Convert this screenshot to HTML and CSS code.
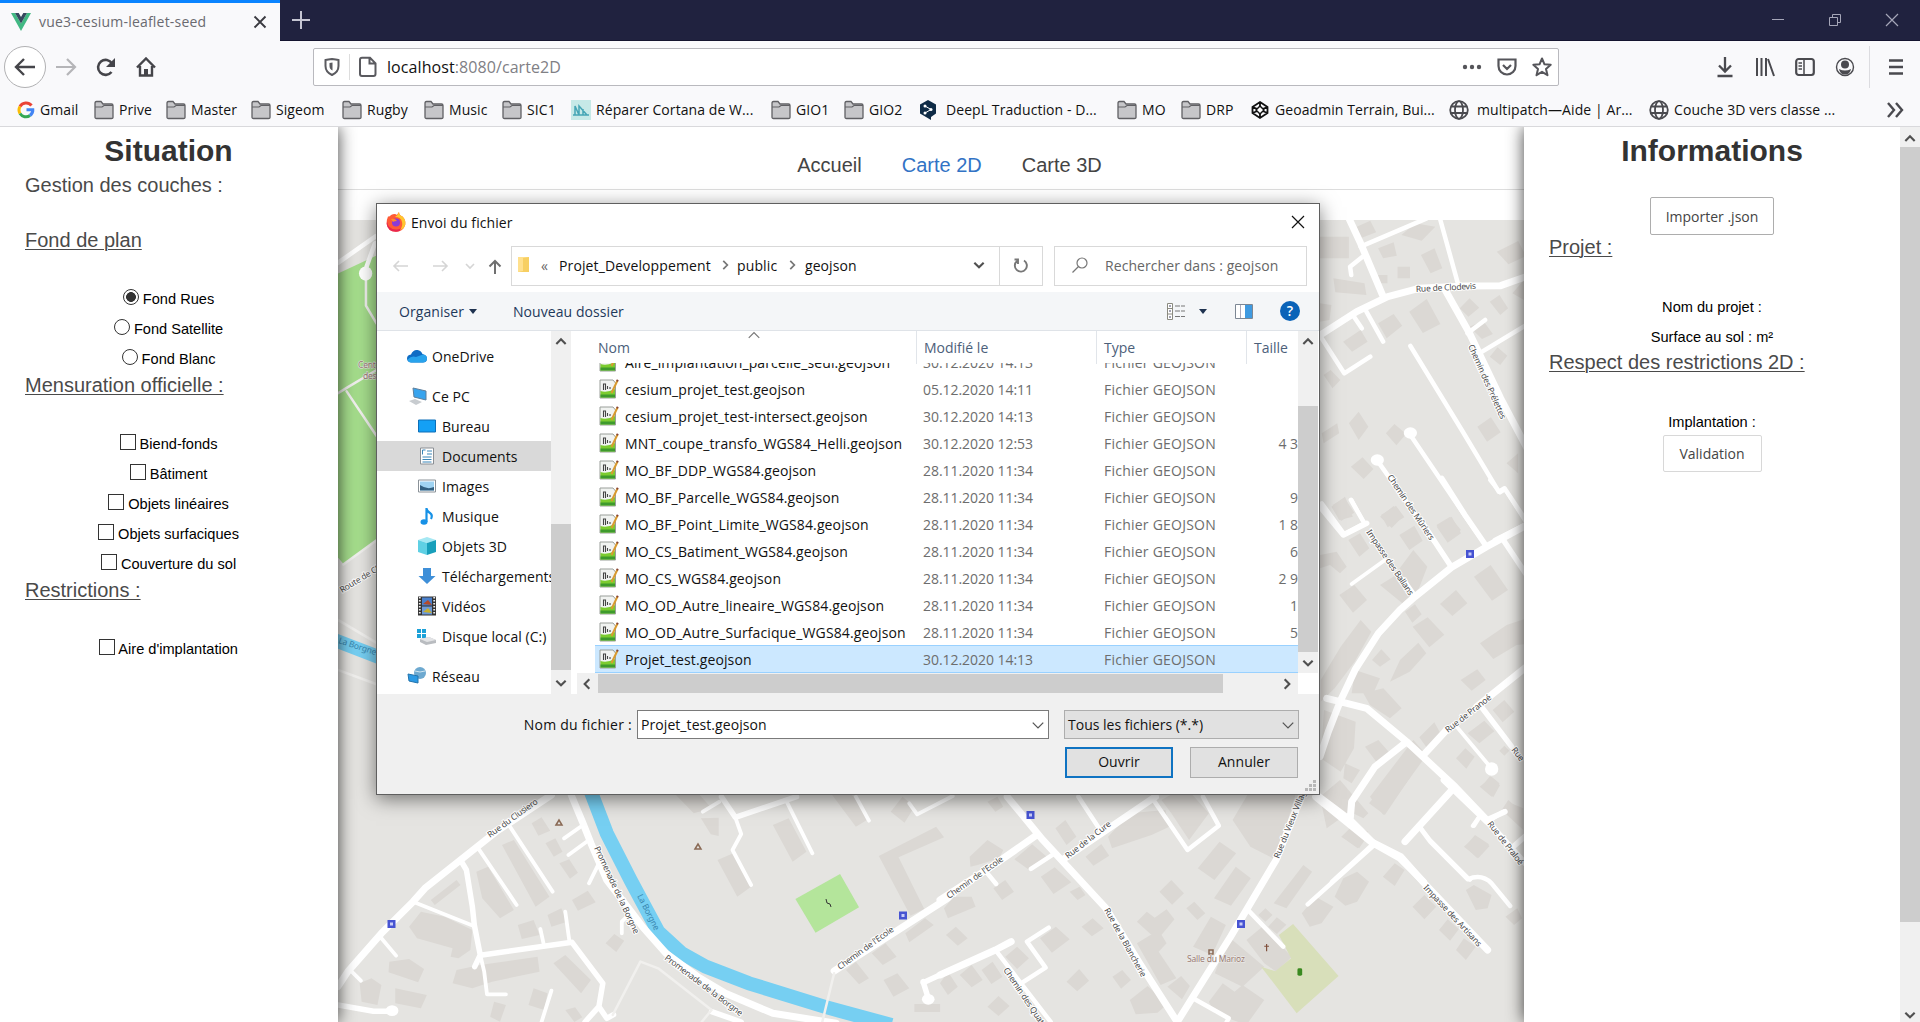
FILE: index.html
```html
<!DOCTYPE html>
<html lang="fr">
<head>
<meta charset="utf-8">
<title>vue3-cesium-leaflet-seed</title>
<link rel="stylesheet" href="styles.css">
</head>
<body>
<svg class="defs" width="0" height="0">
  <symbol id="folder" viewBox="0 0 20 20"><path d="M1 17V3.500Q1 1.500 2.500 1.500H7l2 2.500h8.500Q19 4 19 5.500v12q0 1-1.500 1h-15Q1 18.500 1 17z" fill="#c6c6c9" stroke="#606064" stroke-width="1.300"/><path d="M1 7h7l2-1.500h9" fill="none" stroke="#606064" stroke-width="1.200"/></symbol>
  <symbol id="globe" viewBox="0 0 20 20"><g fill="none" stroke="#4a4a4f" stroke-width="1.800"><circle cx="10" cy="10" r="8.800"/><ellipse cx="10" cy="10" rx="4" ry="8.800"/><path d="M2 6.500h16M1.500 13h17"/></g></symbol>
  <symbol id="geofile" viewBox="0 0 20 20"><path d="M1 1h13l2.500 3v15H1z" fill="#f1f3f1" stroke="#9a9f9a"/><path d="M1.500 12Q8 14 16 10V18.500H1.500z" fill="#7ccc30"/><path d="M1.500 15.500h14.500v3h-14.500z" fill="#3e9a2d"/><path d="M4.500 11V5h2v6M8.500 7v3M11 8v2" stroke="#444" fill="none" stroke-width="1.100"/><path d="M18.500 1.500L12.500 14" stroke="#d99a30" stroke-width="2"/><path d="M18.800 .8l-.8 1.600" stroke="#843" stroke-width="2"/></symbol>
  <symbol id="up" viewBox="0 0 12 12"><path d="M2 8.500L6 4.500l4 4" fill="none" stroke="#505050" stroke-width="1.800"/></symbol>
  <symbol id="down" viewBox="0 0 12 12"><path d="M2 4l4 4 4-4" fill="none" stroke="#505050" stroke-width="1.800"/></symbol>
  <symbol id="thin" viewBox="0 0 12 12"><path d="M1.500 4L6 8.500 10.500 4" fill="none" stroke="#555" stroke-width="1.100"/></symbol>
  <symbol id="crumb" viewBox="0 0 12 12"><path d="M4.500 2.500L8 6 4.500 9.500" fill="none" stroke="#777" stroke-width="1.500"/></symbol>
  <symbol id="right" viewBox="0 0 12 12"><path d="M4 2l4 4-4 4" fill="none" stroke="#505050" stroke-width="1.800"/></symbol>
  <symbol id="left" viewBox="0 0 12 12"><path d="M8 2L4 6l4 4" fill="none" stroke="#505050" stroke-width="1.800"/></symbol>
</svg>

<header class="browser">
  <div class="tabbar">
    <div class="tab">
      <svg width="20" height="18" viewBox="0 0 20 18"><path d="M0 0h4l6 10.500L16 0h4L10 18z" fill="#41b883"/><path d="M4 0h3.700L10 4l2.300-4H16l-6 10.500z" fill="#35495e"/></svg>
      <span class="tab-title">vue3-cesium-leaflet-seed</span>
      <svg class="tab-close" width="14" height="14" viewBox="0 0 14 14"><path d="M1.500 1.500l11 11m0-11l-11 11" stroke="#3a3a40" stroke-width="1.900"/></svg>
    </div>
    <svg class="plus" width="18" height="18" viewBox="0 0 18 18"><path d="M9 0v18M0 9h18" stroke="#c5c5d2" stroke-width="2"/></svg>
    <div class="winctl">
      <svg width="14" height="14" viewBox="0 0 14 14"><path d="M1 6.500h12" stroke="#a5a6b8"/></svg>
      <svg width="14" height="14" viewBox="0 0 14 14"><path d="M1.500 4.500h8v8h-8zM4.500 4.500v-3h8v8h-3" fill="none" stroke="#a5a6b8"/></svg>
      <svg width="14" height="14" viewBox="0 0 14 14"><path d="M1 1l12 12m0-12L1 13" stroke="#a5a6b8" stroke-width="1.200"/></svg>
    </div>
  </div>
  <div class="navbar">
    <div class="back"><svg width="22" height="20" viewBox="0 0 22 20"><path d="M21 10H3M10 2L2 10l8 8" fill="none" stroke="#45454a" stroke-width="2.400"/></svg></div>
    <svg class="fwd" width="22" height="20" viewBox="0 0 22 20"><path d="M1 10h18M12 2l8 8-8 8" fill="none" stroke="#b5b5b8" stroke-width="2.200"/></svg>
    <svg class="reload" width="20" height="20" viewBox="0 0 20 20"><path d="M15.500 15A7.500 7.500 0 1 1 16 6.500" fill="none" stroke="#45454a" stroke-width="2.600"/><path d="M19 1v9h-9z" fill="#45454a"/></svg>
    <svg class="home" width="20" height="20" viewBox="0 0 20 20"><path d="M1 10.500L10 1.500l9 9M4 9v9.500h12V9" fill="none" stroke="#45454a" stroke-width="2.400"/><path d="M8 12h4v6H8z" fill="#45454a"/></svg>
    <div class="urlbar">
      <svg width="18" height="20" viewBox="0 0 18 20"><path d="M9 2Q13 2.500 15.500 3v6q0 6-6.500 9-6.500-3-6.500-9V3Q5 2.500 9 2z" fill="none" stroke="#5a5a5f" stroke-width="2"/><path d="M9.500 5.500v8Q6.500 12 6.500 9V6z" fill="#5a5a5f"/></svg>
      <span class="sep"></span>
      <svg width="20" height="22" viewBox="0 0 20 22"><path d="M4 1.800h8l5.500 5.500V18q0 2-2 2H4q-2 0-2-2V3.800q0-2 2-2zM11.500 2v5.500H17" fill="none" stroke="#5a5a5f" stroke-width="2"/></svg>
      <span class="url"><b>localhost</b>:8080/carte2D</span>
      <span class="urlicons">
        <svg width="20" height="20" viewBox="0 0 20 20"><g fill="#55555a"><circle cx="3" cy="10" r="2.200"/><circle cx="10" cy="10" r="2.200"/><circle cx="17" cy="10" r="2.200"/></g></svg>
        <svg width="20" height="20" viewBox="0 0 20 20"><path d="M1.500 2.500h17V9a8.500 8.500 0 0 1-17 0zM6 8l4 4 4-4" fill="none" stroke="#55555a" stroke-width="2.200"/></svg>
        <svg width="20" height="20" viewBox="0 0 20 20"><path d="M10 1.500l2.500 5.800 6.200.5-4.700 4.100 1.500 6.300L10 14.800l-5.500 3.400L6 11.900 1.300 7.800l6.200-.5z" fill="none" stroke="#55555a" stroke-width="2" stroke-linejoin="round"/></svg>
      </span>
    </div>
    <div class="tools">
      <svg width="20" height="22" viewBox="0 0 20 22"><path d="M10 1v14M4 9.500l6 6 6-6M2.500 20h15" fill="none" stroke="#4a4a4f" stroke-width="2.300"/></svg>
      <svg width="20" height="20" viewBox="0 0 20 20"><path d="M2 1v18M6.500 1v18M11 1v18M13 2l6 17" fill="none" stroke="#4a4a4f" stroke-width="2"/></svg>
      <svg width="20" height="20" viewBox="0 0 20 20"><rect x="1.200" y="2" width="17.600" height="16" rx="2.500" fill="none" stroke="#4a4a4f" stroke-width="2.200"/><path d="M9 2v16M3.500 6H7M3.500 9H7M3.500 12H7" stroke="#4a4a4f" stroke-width="1.500"/></svg>
      <svg width="20" height="20" viewBox="0 0 20 20"><circle cx="10" cy="10" r="8.500" fill="none" stroke="#4a4a4f" stroke-width="1.400"/><circle cx="10" cy="7.500" r="4" fill="#4a4a4f"/><path d="M4 12q6 3 12 0-1 5.500-6 5.500T4 12z" fill="#4a4a4f"/></svg>
      <span class="tsep"></span>
      <svg width="16" height="18" viewBox="0 0 16 18"><path d="M1 2.500h14M1 9h14M1 15.500h14" stroke="#4a4a4f" stroke-width="2.300"/></svg>
    </div>
  </div>
  <nav class="bookmarks">
    <a><svg width="18" height="18" viewBox="0 0 18 18"><g fill="none" stroke-width="3"><path d="M14.500 4.500A7 7 0 0 0 3 5.500" stroke="#ea4335"/><path d="M3 5.500A7 7 0 0 0 3 12.500" stroke="#fbbc05"/><path d="M3 12.500A7 7 0 0 0 13 14.500" stroke="#34a853"/><path d="M13 14.500Q16 12 15.800 8.800H9.500" stroke="#4285f4"/></g></svg>Gmail</a>
    <a><svg class="i20"><use href="#folder"/></svg>Prive</a>
    <a><svg class="i20"><use href="#folder"/></svg>Master</a>
    <a><svg class="i20"><use href="#folder"/></svg>Sigeom</a>
    <a><svg class="i20"><use href="#folder"/></svg>Rugby</a>
    <a><svg class="i20"><use href="#folder"/></svg>Music</a>
    <a><svg class="i20"><use href="#folder"/></svg>SIC1</a>
    <a><svg class="i20" viewBox="0 0 20 20"><path d="M0 0h20v20H0z" fill="#c6e9e7"/><path d="M2 15h16M4 15V6l4 9V6l8 9M12 15V9" fill="none" stroke="#45a5b5" stroke-width="1.500"/></svg>Réparer Cortana de W...</a>
    <a><svg class="i20"><use href="#folder"/></svg>GIO1</a>
    <a><svg class="i20"><use href="#folder"/></svg>GIO2</a>
    <a><svg class="i20 wide" viewBox="0 0 20 20"><path d="M10 0l8 4.500v9L13 17v3l-5-3-6-3.500v-9z" fill="#0f2b46"/><path d="M7 6l6 3.500L7 13" fill="none" stroke="#fff"/><g fill="#fff"><circle cx="7" cy="6" r="1.500"/><circle cx="13" cy="9.500" r="1.500"/><circle cx="7" cy="13" r="1.500"/></g></svg>DeepL Traduction - D...</a>
    <a><svg class="i20"><use href="#folder"/></svg>MO</a>
    <a><svg class="i20"><use href="#folder"/></svg>DRP</a>
    <a><svg class="i20" viewBox="0 0 20 20"><path d="M10 2l7.500 5v6L10 18l-7.500-5V7zM2.500 7l15 6m0-6l-15 6M10 2v4M10 14v4" fill="none" stroke="#111" stroke-width="1.800"/><path d="M10 6l4 4-4 4-4-4z" fill="#fff" stroke="#111" stroke-width="1.500"/></svg>Geoadmin Terrain, Bui...</a>
    <a><svg class="i20 wide"><use href="#globe"/></svg>multipatch—Aide | Ar...</a>
    <a><svg class="i20"><use href="#globe"/></svg>Couche 3D vers classe ...</a>
    <svg class="more" width="17" height="16" viewBox="0 0 17 16"><path d="M1 1l6 7-6 7M9 1l6 7-6 7" fill="none" stroke="#4a4a4f" stroke-width="2.400"/></svg>
  </nav>
</header>

<main class="page">
  <aside class="panel left">
    <h1>Situation</h1>
    <h2 class="plain">Gestion des couches :</h2>
    <h2>Fond de plan</h2>
    <label><input type="radio" name="fond" checked> Fond Rues</label>
    <label><input type="radio" name="fond"> Fond Satellite</label>
    <label><input type="radio" name="fond"> Fond Blanc</label>
    <h2>Mensuration officielle :</h2>
    <label><input type="checkbox"> Biend-fonds</label>
    <label><input type="checkbox"> Bâtiment</label>
    <label><input type="checkbox"> Objets linéaires</label>
    <label><input type="checkbox"> Objets surfaciques</label>
    <label><input type="checkbox"> Couverture du sol</label>
    <h2>Restrictions :</h2>
    <label><input type="checkbox"> Aire d'implantation</label>
  </aside>

  <section class="center">
    <nav class="menu"><a>Accueil</a><a class="on">Carte 2D</a><a>Carte 3D</a></nav>
    <svg class="map" viewBox="338 220 1186 802" preserveAspectRatio="none">
      <!-- west edge: park, stream -->
      <g transform="translate(0 120) scale(.3333 .3571)">
        <path class="park" d="M1014 430L1140 375V1170L1032 1245 1014 1225z"/>
        <path class="rd w5" d="M1014 400L1128 325M1125 345L1100 410"/><path class="rd w3 soft" d="M1098 440V520L1130 570M1014 765L1040 750 1130 700M1040 760L1130 885M1030 1245L1140 1170M1014 1400L1140 1470M1014 1540L1130 1580"/>
        <circle class="dot" cx="1097" cy="430" r="20"/>
        <path class="river" d="M1000 1455L1140 1505"/>
      </g>
      <!-- south-west quarter -->
      <g transform="translate(330 780) scale(.3954 .3333)">
        <path class="bld" d="M435 195l30-15 90 170-35 30zM370 275l30-15 65 130-35 25-45-60zM255 360l65-60 10 15-65 60zM200 440l30-45 60 15 70 40-5 60-30 25-20-5 5-25-90-30zM150 545l50-8 38 30-15 40-75-30zM75 610l30-15 25 20-10 60-40-10zM165 625l80 20-15 40-65-15zM320 570l60-15 145-25 5 45-120 30-50 20-50-15zM565 550l30-25 65 75-25 40zM475 435l40-15 15 45-45 12zM550 405l35-20 15 40-40 15zM612 360l40-28 20 35-45 25zM510 130l25-18 22 40-30 15zM545 190l25-15 18 40-22 15zM580 250l25-12 22 40-20 18zM697 490l22-28 25 20-20 34zM515 625l35 15-8 50-40-15zM415 665l30 10-15 50-25-15zM595 690l25-8 18 30-20 14z"/>
        <path class="bld" d="M875 45h60l30 40-45 15zM938 115l45-2v55l-20-5zM980 240l40-20 45 100-35 30zM1120 135l40-20 45 100-35 30zM1270 45h50l45 70-35 25zM1418 95l30-45 30 30-25 48zM1388 228l145-88 20 32-115 60 65 155-35 20zM1455 460l50-45 22 20-62 52zM1370 520l35-30 28 40-35 25zM1305 570l25-25 33 50-25 18zM1400 600l35-20 30 45-40 25zM1478 672h65v24h-65z"/>
        <path class="park2" d="M1177 357L1290 282 1338 382 1228 458z"/>
        <path class="river" d="M658 30L700 160 760 300 830 455 890 520 950 560 1060 610 1250 680 1420 735"/>
        <path class="rd w8" d="M20 620L45 575 130 460 210 365 240 325 330 240 420 155 560 45M610 45L640 130 660 190 700 300 765 400 790 440 850 520 930 590 1000 640 1120 700 1280 730M1275 573L1575 345"/>
        <path class="rd w6" d="M330 240L345 270 360 380 365 435 380 525 366 560M385 525L612 487 690 610 680 680 645 726M680 680L700 715 717 704M990 50L1025 112 1180 50M1500 605L1513 655M1500 608L1575 567M20 675L110 694H150M965 695L1040 726"/>
        <path class="rd w4" d="M210 365L362 437M375 205L472 375M455 140L563 335M540 490L532 447M605 480L595 395M380 525L390 575 397 643H445M130 475L167 527M55 575L78 602M640 135L592 175M655 180L603 225M680 250L655 310M755 405L738 425V460M560 632L535 726M1025 112L1040 162 1018 210 1065 315M1155 65L1220 220M985 65L943 95M1330 50L1363 122M1465 70L1485 103 1575 48"/>
        <path class="rd w4 soft" d="M715 705L785 545 830 565 965 690 940 726M1275 580L1245 726"/>
        <circle class="dot" cx="157" cy="692" r="16"/><circle class="dot" cx="1513" cy="658" r="16"/>
      </g>
      <!-- north-east quarter -->
      <g transform="translate(1310 120) scale(.3891 .3333)">
        <path class="bld" d="M25 350h75v65H25zM120 320l35-18 15 35-40 18zM235 345l35-35 52 10-35 42zM175 385l40-18 8 40-35 8zM285 405l35-20 20 60-30 15zM480 395l55-32 20 45-45 25zM225 440h32v35h-32zM60 475l80 15 5 35-80-8zM175 465h24v25h-24zM25 550l30 5-5 45-25 5zM85 665l45-35 18 35-40 30zM175 610l40-28 22 35-40 38zM255 575l45-38 35 75-45 27zM385 565l25-30 25 28-28 27zM462 545l25-20 22 40-20 20zM410 620l35-18 25 40-28 15zM462 710l20-28 25 25-18 28zM35 765l18-15 25 30-20 25zM30 940l40-30 5 30-40 30zM100 910l25-35 25 45-25 40zM195 940l22-28 30 30-25 34zM430 920l35-28 25 45-35 28zM105 1040l30-28 28 35-25 30zM505 1030l30-30v60zM55 1160l35-30 20 60-35 10zM180 1190l35-32 25 30-30 36zM325 1215l35-25 28 40-30 30zM520 520l30-40v60z"/>
        <path class="rd w8" d="M100 295L130 370 190 535M20 650L120 575 200 530 280 505 400 498 490 497 555 470M345 505L410 640 490 835 560 990"/>
        <path class="rd w5" d="M130 380L300 295M335 300L380 490M258 678L390 930 485 1115 500 1105 560 1210M258 945L400 1190 445 1265M175 1025L320 1265M30 655L88 760 155 710M145 575L188 665M135 410L103 440 106 465M113 590L133 625M405 640L450 600M435 700L560 612M475 1260L560 1210M30 1150L88 1243 140 1210 105 1140"/>
        <circle class="dot" cx="258" cy="939" r="17"/><circle class="dot" cx="173" cy="1020" r="17"/>
      </g>
      <!-- east quarter -->
      <g transform="translate(1300 480) scale(.3333)">
        <path class="bld" d="M98 75l35-22 30 45-40 25zM243 105l45-28 25 35-50 30zM298 165l45-28 25 45-40 28zM145 180l35-20 28 45-30 25zM410 140l45-30 28 50-40 28zM60 225l50-10 30 45-20 20-30-25-30 10zM118 345l45-30 38 45-42 38zM240 315l40-25 60-80 42 50-25 65-50 45zM522 290l50-35 52 75-48 32zM420 372l48-42 34 40-45 38zM315 395l30-22 20 30-28 25zM338 440l45-28 50 52-45 38zM540 490l80-55 90-30v85l-60 5-70 42zM216 540l28-32 28 30-32 22zM270 605l30-65 55-52 24 32-50 55zM482 600l50-32 25 32-42 32zM62 600l60-100 60-80 32 35-50 90-60 80-42 40zM165 570l75 25-20 45-65 0zM190 640l60-15 55 60-35 30-60-40zM358 772l45-45 25 45-40 42zM72 690l95 35-5 80-40 70-60-40zM195 800l40-20 35 40-30 40zM210 950l130-170 40 45-130 180zM578 690l35-30 30 35-35 32zM503 760l50-38 30 32-45 36zM468 835l28-30 28 25-25 36zM545 920l25-32 30 28-20 36zM598 812l15-15 15 15-15 15zM60 950l60-50 85 100-15 15-40-20-70 50zM135 850l45 20-25 40-25-15zM125 1070l40-35 40 20-32 50zM495 1100l30-35 42 28-35 42zM605 990l20-30 45 40v50z"/>
        <path class="rd w8" d="M60 830L85 755 120 665 165 570 235 460 300 390 345 350 455 262 560 200 680 135M50 945L150 1020 220 1090 300 1135 370 1205M80 655L120 665 200 685 320 785 465 920 560 1020M375 820L440 750M530 680L680 560M465 920L315 1085M320 785L225 860 155 965 150 1025"/>
        <path class="rd w6" d="M60 80L130 165 200 130M345 350L310 300M455 262L365 125M560 200L495 105 425 -5M610 180L680 285M540 675L635 800M640 1100L680 1065M560 1020L680 1155M560 1020L615 995"/>
        <path class="rd w4" d="M155 60L190 125M155 312L255 240M470 740L570 860M570 0L600 38 615 28 680 130M545 1000L518 1038M360 1040L390 1080 510 1200M220 1090L95 1205"/>
        <circle class="dot" cx="575" cy="867" r="20"/>
      </g>
      <!-- south-east quarter -->
      <g transform="translate(940 780) scale(.3954 .3333)">
        <path class="bld" d="M120 65l25-15 15 30-20 15zM75 230l45-50 40 30-10 25-55 20-18 5zM188 238l45-45 40 40-50 35zM292 145l25-25 28 50-25 25zM368 230l40-38 20 35-40 30zM255 290l35-28 42 45-45 35zM425 170l55-70 90-10 10 50-45 25-100 40zM328 335l25-15 15 25-20 15zM135 325l30-25 22 35-30 25zM10 385l25-35 45 0 10 30-70 35zM15 465l25-25 30 35-25 22zM358 440l28-25 28 30-30 24zM555 335l30-35 32 40-30 34zM652 265l55-80 42 35-55 80zM693 355l55-95 38 35-50 82zM740 120l40-80 120 0-50 200-65-40zM844 370l75-115 22 20-65 110zM1015 170l30-35 35 35-20 35zM623 385l20-20 28 35-20 20zM498 425l25-30 20 18 30-25 20 30-35 50-25-5zM640 500l45-90 38 25-35 90zM805 405l18-20 18 20-18 20zM830 440l22-28 24 22-24 28zM498 490l55-40 20 40-20 25 45 80-40 20zM575 620l35-32 22 30-20 40zM480 660l45-42 50 55-25 25-55 5zM695 580l35-110 30 30 60 60-55 60zM775 480l40-40 75 90-40 45-30-25zM680 665l35-55 30 25 20-20 55 45-45 75-80-35zM165 530l30-30 30 35-30 32zM105 570l28-25 25 45-28 22zM50 585l30-30 28 45-28 22zM0 610l20-35 25 45-25 25zM320 605l32-38 25 35-30 32zM436 590l25-20 22 30-25 26zM120 680l28-32 28 30-28 30zM253 475l40-35 35 38-45 40zM998 350l22-55 35-20 30 30-30 60-30 12zM915 400l35-50 45 30-30 50-30 10zM1120 290l30-40 25 20-25 48zM1195 380l30-35 30 35-30 38zM1262 450l22-32 28 30-22 34zM1305 510l20-35 30 25-25 40zM1325 200l30-32 35 30-28 36zM1365 20l30-30 20 20-20 40zM1085 70l55-80h50l-65 115zM1330 330l20-15 45 30-10 40-30 5zM1430 410l30-25 12 30-20 20zM560 60l60-40 60 80-50 80-45-80zM1435 65l40 50v-30z"/>
        <path class="grave" d="M893 432L1008 588 902 700 812 560 848 574 888 535 857 465z"/>
        <path class="rd w8" d="M170 50L260 180 420 385 505 550 600 726 640 650 735 470 850 240 915 45M0 360L130 260 245 165M315 235L545 50M950 50L1090 185 1165 230 1225 310L1385 510M1385 125L1275 0M0 585L140 510 180 485"/>
        <path class="rd w5" d="M350 50L405 150M540 60L626 210 705 137 665 50M290 220L230 267M120 280L142 312M775 385L868 500M640 655L730 715 725 726M1098 195L930 373M1215 145L1240 185 1335 298Q1370 280 1395 310L1442 378M1305 20L1178 185M1370 100L1350 137M1385 125L1425 95M1080 0L1045 60 1035 120M1385 125L1475 245M140 510L280 726M205 610L267 563 220 485 275 443"/>
        <path d="M826 492v22M820 499h12" stroke="#80503c" stroke-width="3"/><rect x="904" y="565" width="12" height="22" rx="4" fill="#3a8a20"/>
      </g>
      <!-- bus stops and landmarks -->
      <g class="stops"><path d="M387.500 920h8v8h-8zM899 911.500h8v8h-8zM1026.500 811h8v8h-8zM1237 920h8v8h-8zM1466 550h8v8h-8z"/><path class="in" d="M390 922.500h3v3h-3zM901.500 914h3v3h-3zM1029 813.500h3v3h-3zM1239.500 922.500h3v3h-3zM1468.500 552.500h3v3h-3z"/></g>
      <path d="M556 825l3-5 3 5zM695 849l3-5 3 5zM1209 950h4v4h-4z" fill="none" stroke="#8a6a55" stroke-width="1.500"/><path d="M826 899l1 4 3 1 1 3" stroke="#333" fill="none"/>
      <g class="lbl">
        <text transform="translate(490 838) rotate(-36)">Rue du Clusiero</text>
        <text transform="translate(594 848) rotate(65)">Promenade de la Borgne</text>
        <text class="water" transform="translate(637 896) rotate(63)">La Borgne</text>
        <text transform="translate(664 959) rotate(37)">Promenade de la Borgne</text>
        <text transform="translate(840 970) rotate(-36)">Chemin de l'Ecole</text>
        <text transform="translate(949 899) rotate(-35)">Chemin de l'Ecole</text>
        <text transform="translate(1068 859) rotate(-38)">Rue de la Cure</text>
        <text transform="translate(1104 910) rotate(61)">Rue de la Blancherie</text>
        <text transform="translate(1003 970) rotate(56)">Chemin des Quatre-Sa</text>
        <text transform="translate(1279 859) rotate(-68)">Rue du Vieux Village</text>
        <text transform="translate(1423 888) rotate(47)">Impasse des Artisans</text>
        <text transform="translate(1487 824) rotate(52)">Rue de Praloé</text>
        <text transform="translate(1448 733) rotate(-38)">Rue de Pranoé</text>
        <text transform="translate(1366 532) rotate(56)">Impasse des Ballans</text>
        <text transform="translate(1387 477) rotate(56)">Chemin des Mûriers</text>
        <text transform="translate(1468 346) rotate(66)">Chemin des Prélettes</text>
        <text transform="translate(1416 292) rotate(-3)">Rue de Clodevis</text>
        <text transform="translate(342 593) rotate(-31)">Route de Ch</text>
        <text class="water" transform="translate(338 643) rotate(18)">La Borgne</text>
        <text class="poi" x="358" y="368">Cent</text><text class="poi" x="363" y="379">des</text>
        <text class="poi" x="1187" y="962">Salle du Marioz</text>
        <text transform="translate(1511 750) rotate(52)">Rue</text>
      </g>
    </svg>
  </section>

  <aside class="panel right">
    <h1>Informations</h1>
    <button class="btn import">Importer .json</button>
    <h2>Projet :</h2>
    <p>Nom du projet :</p>
    <p>Surface au sol : m²</p>
    <h2>Respect des restrictions 2D :</h2>
    <p>Implantation :</p>
    <button class="btn valid">Validation</button>
  </aside>
  <div class="vscroll page-scroll"><svg class="arr"><use href="#up"/></svg><i></i><svg class="arr"><use href="#down"/></svg></div>
</main>

<section class="dialog">
  <div class="title">
    <svg width="20" height="20" viewBox="0 0 20 20"><path d="M2 4.500Q3.500 5 5 3q4-2 6 0 1-2 2-3 0 3 3.500 4.500Q20 8 19.300 12.500 17.500 19.500 10 19.800 2 19.500.7 12 .3 8 2 4.500z" fill="#ff5a36"/><path d="M1 9q1 9 10 8.500 3 0 5-2-1.500 4.200-6 4.300Q1.500 19.500.7 12z" fill="#e8264f"/><path d="M13 0q0 3 3.500 4.500Q20 8 19.300 12.500 18 17 14 18q3-4 2-8-1-5-7-5 3-2 4-5z" fill="#ffc62e"/><circle cx="10" cy="10.500" r="4" fill="#8a3bd8"/><path d="M5 7q4-1 6 2-3 0-4 1z" fill="#ff8a2c"/></svg>
    <span>Envoi du fichier</span>
    <svg class="x" width="14" height="14" viewBox="0 0 14 14"><path d="M1 1l12 12m0-12L1 13" stroke="#111" stroke-width="1.200"/></svg>
  </div>
  <div class="addr">
    <svg width="134" height="38" viewBox="0 0 134 38"><g fill="none" stroke="#d5d5d5" stroke-width="1.600"><path d="M31 20H17m5-5l-5 5 5 5M56 20h14m-5-5l5 5-5 5M89 18l4 4 4-4"/><path d="M118 28V15m-5.500 5.500L118 15l5.500 5.500" stroke="#707070" stroke-width="2"/></g></svg>
    <div class="path">
      <svg width="14" height="18" viewBox="0 0 14 18"><path d="M1 1h11v15H1z" fill="#ffe08d"/><path d="M6 2l6-1v15H1l5-1z" fill="#f7cf62"/></svg>
      <span class="laquo">«</span><span class="p1">Projet_Developpement</span><svg class="arr"><use href="#crumb"/></svg><span class="p2">public</span><svg class="arr"><use href="#crumb"/></svg><span class="p3">geojson</span>
      <svg class="arr dd"><use href="#down"/></svg>
      <div class="refresh"><svg width="16" height="16" viewBox="0 0 16 16"><path d="M11 2.500A6 6 0 1 1 4 3M1.500 1.500H5V6" fill="none" stroke="#777" stroke-width="1.900"/></svg></div>
    </div>
    <div class="search"><svg width="16" height="16" viewBox="0 0 16 16"><circle cx="10" cy="6" r="5" fill="none" stroke="#777" stroke-width="1.200"/><path d="M6.500 9.500L.5 15.500" stroke="#777" stroke-width="1.200"/></svg><span>Rechercher dans : geojson</span></div>
  </div>
  <div class="toolbar">
    <span class="org">Organiser</span><span class="tri"></span><span class="newf">Nouveau dossier</span>
    <svg class="view" width="19" height="17" viewBox="0 0 19 17"><path d="M.5.500h5v16h-5zM.5 5.500h5M.5 11h5" fill="#fff" stroke="#8a8a80"/><path d="M2 3h2M2 8h2M2 14h2" stroke="#446"/><path d="M8 3h10M8 8h10M8 13.500h10" stroke="#777" stroke-dasharray="5 1"/></svg>
    <span class="tri t2"></span>
    <svg class="pane" width="18" height="15" viewBox="0 0 18 15"><path d="M.5.500h17v14H.5z" fill="#fff" stroke="#7c8794"/><path d="M5.500 1v13" stroke="#aab"/><path d="M10 1h7v13h-7z" fill="#3f9ae0"/></svg>
    <span class="help">?</span>
  </div>
  <div class="body">
    <div class="tree">
      <div class="it top"><svg class="i20" viewBox="0 0 20 20"><path d="M4 16.500q-4-.5-4-4 0-3.500 4-4Q6 3.500 10.500 4q3.500.5 5 4Q20 9 20 12.500q0 4-4 4z" fill="#0f6cc4"/><path d="M4 16.500q-3-.5-3.500-3Q5 9 9 11l7-2.500q4 .5 4 4t-4 4z" fill="#28a3ec"/></svg>OneDrive</div>
      <div class="it top pc"><svg class="i20" viewBox="0 0 20 20"><path d="M6 2l13 3v9L7 11z" fill="#38a4ee" stroke="#5f7f9b"/><path d="M2 15l6-2 7 3-6 3z" fill="#c8ccd0"/></svg>Ce PC</div>
      <div class="it"><svg class="i20" viewBox="0 0 20 20"><path d="M1.500 4h17v12h-17z" fill="#14a0f5" stroke="#0c6fb8"/></svg>Bureau</div>
      <div class="it sel"><svg class="i20" viewBox="0 0 20 20"><path d="M3.500 2h13v16h-13z" fill="#fff" stroke="#8b8f94"/><path d="M5.500 8.500V4h3M10 5h5M10 8h5M5.500 11h9M5.500 13.500h9M5.500 16h9" stroke="#3b86b8" fill="none"/></svg>Documents</div>
      <div class="it"><svg class="i20" viewBox="0 0 20 20"><path d="M1.500 4h17v12h-17z" fill="#fff" stroke="#8b9298"/><path d="M3 5.500h14v9H3z" fill="#9fd3f2"/><path d="M3 9q7 5 14 2v3.500H3z" fill="#315f80"/></svg>Images</div>
      <div class="it"><svg class="i20" viewBox="0 0 20 20"><path d="M9.500 16V2q0 3 3.500 5 3 2 1 6" stroke="#1691e6" stroke-width="2.200" fill="none"/><ellipse cx="7" cy="16" rx="3.500" ry="2.700" fill="#1691e6"/></svg>Musique</div>
      <div class="it"><svg class="i20" viewBox="0 0 20 20"><path d="M1 4l9-3 9 3-9 3z" fill="#a5e8f3"/><path d="M1 4l9 3v12l-9-3z" fill="#5fd0e4"/><path d="M19 4l-9 3v12l9-3z" fill="#189fbb"/></svg>Objets 3D</div>
      <div class="it"><svg class="i20" viewBox="0 0 20 20"><path d="M6 2h8v8h4.500L10 18 1.500 10H6z" fill="#3e8fd8"/></svg>Téléchargements</div>
      <div class="it"><svg class="i20" viewBox="0 0 20 20"><path d="M1 .5h18v19H1z" fill="#333"/><path d="M5 1.500h10v8H5z" fill="#4a80cc"/><path d="M5 10.500h10v8H5z" fill="#6d9ad8"/><path d="M6 8l5-4 4 5z" fill="#b44a2a"/><path d="M6 16l5-4 4 5z" fill="#c6b030"/><path d="M2.800 1v18M17.200 1v18" stroke="#eee" stroke-width="1.800" stroke-dasharray="1.500 1.500"/></svg>Vidéos</div>
      <div class="it"><svg class="i20" viewBox="0 0 20 20"><path d="M0 3h4v4H0zM5 3h4v4H5zM0 8h4v4H0zM5 8h4v4H5z" fill="#1ba1d8"/><path d="M3 13l9-2 7 3v3l-10 2-6-3z" fill="#b9bcc0"/><path d="M3 13l9-2 7 3-9 2z" fill="#e3e4e6"/></svg>Disque local (C:)</div>
      <div class="it top net"><svg class="i20" viewBox="0 0 20 20"><circle cx="13" cy="7" r="6" fill="#6da9d0"/><path d="M8 5q5 2 10 0" stroke="#cfe6f2" fill="none"/><path d="M1 8l10 2v7L2 15z" fill="#2c9ae4" stroke="#2374ad"/></svg>Réseau</div>
    </div>
    <div class="vscroll tree-scroll"><svg class="arr"><use href="#up"/></svg><i></i><svg class="arr"><use href="#down"/></svg></div>
    <div class="files">
      <div class="list">
        <svg class="arr sort" viewBox="0 0 12 12"><path d="M1.500 8.500L6 4l4.500 4.500" fill="none" stroke="#777"/></svg>
        <div class="head"><span>Nom</span><span>Modifié le</span><span>Type</span><span>Taille</span></div>
        <div class="rows">
          <div class="row"><svg class="i20"><use href="#geofile"/></svg><b>Aire_implantation_parcelle_seul.geojson</b><span>30.12.2020 14:13</span><span class="ty">Fichier GEOJSON</span><em></em></div>
          <div class="row"><svg class="i20"><use href="#geofile"/></svg><b>cesium_projet_test.geojson</b><span>05.12.2020 14:11</span><span class="ty">Fichier GEOJSON</span><em></em></div>
          <div class="row"><svg class="i20"><use href="#geofile"/></svg><b>cesium_projet_test-intersect.geojson</b><span>30.12.2020 14:13</span><span class="ty">Fichier GEOJSON</span><em></em></div>
          <div class="row"><svg class="i20"><use href="#geofile"/></svg><b>MNT_coupe_transfo_WGS84_Helli.geojson</b><span>30.12.2020 12:53</span><span class="ty">Fichier GEOJSON</span><em>4 3</em></div>
          <div class="row"><svg class="i20"><use href="#geofile"/></svg><b>MO_BF_DDP_WGS84.geojson</b><span>28.11.2020 11:34</span><span class="ty">Fichier GEOJSON</span><em></em></div>
          <div class="row"><svg class="i20"><use href="#geofile"/></svg><b>MO_BF_Parcelle_WGS84.geojson</b><span>28.11.2020 11:34</span><span class="ty">Fichier GEOJSON</span><em>9</em></div>
          <div class="row"><svg class="i20"><use href="#geofile"/></svg><b>MO_BF_Point_Limite_WGS84.geojson</b><span>28.11.2020 11:34</span><span class="ty">Fichier GEOJSON</span><em>1 8</em></div>
          <div class="row"><svg class="i20"><use href="#geofile"/></svg><b>MO_CS_Batiment_WGS84.geojson</b><span>28.11.2020 11:34</span><span class="ty">Fichier GEOJSON</span><em>6</em></div>
          <div class="row"><svg class="i20"><use href="#geofile"/></svg><b>MO_CS_WGS84.geojson</b><span>28.11.2020 11:34</span><span class="ty">Fichier GEOJSON</span><em>2 9</em></div>
          <div class="row"><svg class="i20"><use href="#geofile"/></svg><b>MO_OD_Autre_lineaire_WGS84.geojson</b><span>28.11.2020 11:34</span><span class="ty">Fichier GEOJSON</span><em>1</em></div>
          <div class="row"><svg class="i20"><use href="#geofile"/></svg><b>MO_OD_Autre_Surfacique_WGS84.geojson</b><span>28.11.2020 11:34</span><span class="ty">Fichier GEOJSON</span><em>5</em></div>
          <div class="row picked"><svg class="i20"><use href="#geofile"/></svg><b>Projet_test.geojson</b><span>30.12.2020 14:13</span><span class="ty">Fichier GEOJSON</span><em></em></div>
        </div>
      </div>
      <div class="vscroll list-scroll"><svg class="arr"><use href="#up"/></svg><i></i><svg class="arr"><use href="#down"/></svg></div>
      <div class="hscroll"><svg class="arr"><use href="#left"/></svg><i></i><svg class="arr"><use href="#right"/></svg></div>
    </div>
  </div>
  <div class="foot">
    <span class="flabel">Nom du fichier :</span>
    <div class="finput"><span>Projet_test.geojson</span><svg class="arr"><use href="#thin"/></svg></div>
    <div class="fcombo"><span>Tous les fichiers (*.*)</span><svg class="arr"><use href="#thin"/></svg></div>
    <div class="actions"><button class="open">Ouvrir</button><button>Annuler</button></div>
    <svg class="grip" width="12" height="12" viewBox="0 0 12 12"><path d="M8 0h3v3H8zM8 4h3v3H8zM8 8h3v3H8zM4 4h3v3H4zM4 8h3v3H4zM0 8h3v3H0z" fill="#b8b8b8"/></svg>
  </div>
</section>
</body>
</html>
```
FILE: styles.css
```css
* { box-sizing: border-box; }
html, body { margin: 0; height: 100%; overflow: hidden; }
body { display: flex; flex-direction: column; width: 1920px; height: 1022px; background: #fff; font-family: "Open Sans", "Noto Sans", sans-serif; font-size: 14px; color: #111; }
svg { display: block; flex: none; }
.defs { position: absolute; }
.i20 { width: 20px; height: 20px; }
.arr { width: 14px; height: 14px; }

/* browser chrome */
.browser { flex: none; height: 127px; background: #f9f9fb; border-bottom: 1px solid #d9d9dc; }
.tabbar { display: flex; align-items: center; height: 41px; background: #20223f; border-bottom: 1px solid #14142f; }
.tab { display: flex; align-items: center; width: 280px; height: 41px; padding: 0 13px 0 11px; background: #f9f9fb; border-top: 3px solid #0a84ff; }
.tab-title { margin-left: 8px; color: #6a6a70; letter-spacing: .2px; white-space: nowrap; }
.tab-close { margin-left: auto; }
.plus { margin-left: 12px; }
.winctl { display: flex; gap: 43px; margin-left: auto; margin-right: 21px; }
.navbar { display: flex; align-items: center; height: 51px; padding-left: 4px; }
.back { display: flex; align-items: center; justify-content: center; width: 42px; height: 42px; border: 1px solid #b1b1b3; border-radius: 50%; background: #fff; }
.fwd { margin-left: 9px; }
.reload { margin-left: 19px; }
.home { margin-left: 20px; }
.urlbar { display: flex; align-items: center; width: 1246px; height: 38px; margin-left: 157px; padding-left: 9px; border: 1px solid #b9b9be; border-radius: 2px; background: #fff; }
.sep { width: 1px; height: 26px; margin: 0 8px; background: #ddd; }
.url { margin-left: 9px; font-size: 16px; letter-spacing: .08px; color: #808085; }
.url b { font-weight: 400; color: #111; }
.urlicons { display: flex; gap: 15px; margin-left: auto; margin-right: 6px; }
.tools { display: flex; align-items: center; gap: 20px; margin-left: 156px; }
.tsep { width: 1px; height: 42px; margin-left: -6px; margin-right: -2px; background: #dcdce0; }
.bookmarks { display: grid; grid-template-columns: 77px 72px 85px 91px 82px 78px 69px 200px 73px 74px 199px 64px 69px 199px 200px 238px 20px; align-items: center; height: 35px; padding-left: 17px; font-size: 14px; letter-spacing: .08px; }
.bookmarks a { display: flex; align-items: center; gap: 5px; white-space: nowrap; }
.wide { margin-right: 3px; }

/* web page */
.page { display: flex; flex: 1; min-height: 0; font-family: "Liberation Sans", Arial, sans-serif; }
.panel { position: relative; z-index: 1; flex: none; padding: 5px 25px 0; background: #fff; box-shadow: 0 0 16px rgba(0,0,0,.75); clip-path: inset(0 -20px 0 -20px); font-size: 14.600px; color: #000; text-align: center; }
.left { width: 338px; }
.left label, .left h1 { margin-right: 1px; }
.right { width: 376px; clip-path: inset(0 0 0 -20px); }
h1 { margin: 0 0 5px; font-size: 30px; line-height: 38px; height: 37px; color: #333; }
h2 { margin: 0 0 32px; font-size: 20px; font-weight: 400; line-height: 23px; color: #4a4a4a; text-align: left; text-decoration: underline; text-decoration-thickness: 1px; text-underline-offset: 2px; }
.plain { text-decoration: none; }
.panel label, .panel p { display: block; height: 30px; margin-top: 0; margin-bottom: 0; line-height: 30px; white-space: nowrap; }
.panel p { line-height: 32px; }
.panel input { appearance: none; width: 16px; height: 16px; margin: 0 0 -1px; border: 1px solid #333; background: #fff; vertical-align: baseline; }
.panel input[type=radio] { border-radius: 50%; }
.panel input:checked { background: radial-gradient(circle, #333 0 4.600px, #fff 5.200px); }
.btn { display: block; margin: 0 auto; border: 1px solid #adadad; border-radius: 2px; background: #fff; font: 14px "Open Sans", sans-serif; color: #444; }
.import { width: 124px; height: 38px; margin-top: 28px; margin-bottom: 1px; }
.right h1 { margin-bottom: 0; }
.valid { width: 99px; height: 37px; margin-top: -1px; border-color: #d8d8d8; }
.center { display: flex; flex: 1; flex-direction: column; min-width: 0; }
.menu { display: flex; flex: none; justify-content: center; gap: 40px; height: 63px; padding: 27px 0 0 37px; margin-bottom: 30px; border-bottom: 1px solid #ddd; font-size: 20px; line-height: 23px; color: #444; }
.on { color: #3273c5; }
.map { width: 100%; flex: 1; min-height: 0; background: #e5e4e1; }
.map path.rd { fill: none; stroke: #fff; stroke-linejoin: round; stroke-linecap: round; vector-effect: non-scaling-stroke; }
.w8 { stroke-width: 7px; } .w6 { stroke-width: 5.500px; } .w5 { stroke-width: 4.500px; } .w4 { stroke-width: 3.800px; } .w3 { stroke-width: 3px; }
.map path.soft { stroke: #f1f0ee; stroke-width: 2.500px; }
.bld { fill: #dbd8d4; }
.dot { fill: #fff; }
.park { fill: #a5dd8c; } .park2 { fill: #b4e59b; } .grave { fill: #d8dfba; }
.river { fill: none; stroke: #76cff2; stroke-width: 14px; vector-effect: non-scaling-stroke; }
.lbl { font: 8.500px "Noto Sans", sans-serif; fill: #4a4a4a; stroke: #fff; stroke-width: 2px; paint-order: stroke; letter-spacing: -.2px; }
.lbl .water { fill: #3a88b0; stroke: none; }
.lbl .poi { fill: #9a7b70; stroke: #eee; stroke-width: 1px; }
.stops { fill: #4653d2; }
.stops .in { fill: #c9cdf8; }
.vscroll { display: flex; flex: none; flex-direction: column; align-items: center; justify-content: space-between; background: #f0f0f0; }
.vscroll i { width: 100%; background: #cdcdcd; }
.page-scroll { width: 20px; padding: 4px 0 0; position: relative; z-index: 2; }
.page-scroll i { height: 775px; margin-bottom: 84px; }

/* file dialog window */
.dialog { position: absolute; left: 376px; top: 203px; z-index: 5; display: flex; flex-direction: column; width: 944px; height: 592px; border: 1px solid #5f5f5f; background: #fff; box-shadow: 0 4px 18px rgba(0,0,0,.5); letter-spacing: .07px; }
.title { display: flex; align-items: center; height: 36px; padding: 0 14px 0 9px; }
.title span { margin-left: 5px; }
.title .x { margin-left: auto; }
.addr { display: flex; height: 52px; padding-top: 6px; }
.path { display: flex; align-items: center; width: 532px; height: 40px; border: 1px solid #d9d9d9; padding: 0 0 2px 5px; }
.laquo { width: 13px; margin-left: 10px; color: #666; }
.p1 { width: 155px; margin-left: 5px; margin-right: 4px; letter-spacing: .13px; }
.p2 { width: 42px; margin: 0 6px 0 5px; letter-spacing: .13px; }
.p3 { margin-left: 6px; }
.path .dd { margin-left: auto; margin-right: 13px; }
.refresh { display: flex; align-items: center; justify-content: center; width: 43px; height: 38px; margin-bottom: -2px; border-left: 1px solid #d9d9d9; }
.search { display: flex; align-items: center; width: 253px; height: 40px; margin-left: 11px; padding: 0 0 2px 17px; border: 1px solid #d9d9d9; color: #666; }
.search span { margin-left: 17px; }
.toolbar { display: flex; align-items: center; height: 39px; padding-left: 22px; border-bottom: 1px solid #dfe3e8; background: #f4f6f8; color: #1e395b; }
.org { width: 64px; }
.tri { width: 0; height: 0; margin-left: 6px; border: 4px solid transparent; border-top: 5px solid #1e3250; border-bottom: 0; }
.newf { width: 112px; margin-left: 36px; }
.view { margin-left: 542px; }
.t2 { margin-left: 13px; }
.pane { margin-left: 28px; }
.help { width: 20px; height: 20px; margin-left: 27px; border-radius: 50%; background: #0a63b8; color: #fff; font-weight: 600; line-height: 19px; text-align: center; }
.body { display: flex; height: 363px; }
.tree { width: 174px; padding-top: 10px; overflow: hidden; }
.it { display: flex; align-items: center; gap: 5px; height: 30px; padding-left: 40px; white-space: nowrap; }
.it svg { margin-bottom: 1px; }
.top { padding-left: 30px; }
.pc { margin-top: 10px; }
.net { margin-top: 10px; }
.sel { background: #d9d9d9; }
.tree-scroll { width: 20px; padding: 3px 0 4px; }
.tree-scroll i { height: 146px; margin-top: 170px; }
.files { display: grid; grid-template-columns: 721px 20px; grid-template-rows: 342px 21px; margin-left: 6px; }
.list { position: relative; display: flex; flex-direction: column; overflow: hidden; }
.sort { position: absolute; left: 170px; top: -3px; }
.head { display: grid; grid-template-columns: 340px 180px 150px 51px; height: 32px; flex: none; color: #4c607a; line-height: 33px; letter-spacing: 0; }
.head span { padding-left: 7px; border-right: 1px solid #e1e5ea; }
.head span:first-child { padding-left: 21px; }
.head span:last-child { border: 0; }
.rows { display: flex; flex: 1; flex-direction: column; justify-content: flex-end; overflow: hidden; padding-left: 18px; }
.row { position: relative; display: grid; grid-template-columns: 20px 304px 180px 150px 45px; align-items: center; flex: none; height: 27px; padding: 1px 0 0 4px; color: #6d6d6d; white-space: nowrap; letter-spacing: -.05px; }
.row b { padding-left: 6px; font-weight: 400; color: #111; letter-spacing: .12px; }
.row .ty { padding-left: 1px; letter-spacing: .23px; }
.row em { font-style: normal; text-align: right; }
.picked { height: 28px; padding-top: 0; border: 1px solid #99d1ff; border-width: 1px 0; background: #cce8ff; }
.list-scroll { padding: 3px 0; }
.list-scroll i { height: 246px; margin-top: 54px; }
.hscroll { display: flex; align-items: center; padding: 0 4px 0 3px; background: #f0f0f0; }
.hscroll i { width: 625px; height: 19px; margin-left: 4px; margin-right: 57px; background: #cdcdcd; }
.foot { display: grid; position: relative; grid-template-columns: 255px 412px 235px; grid-template-rows: 29px 32px; row-gap: 7px; justify-content: start; flex: 1; padding: 16px 0 0 5px; background: #f0f0f0; align-items: center; }
.flabel { padding-right: 5px; text-align: right; letter-spacing: .25px; }
.finput, .fcombo { display: flex; align-items: center; justify-content: space-between; height: 29px; border: 1px solid #7a7a7a; padding: 0 3px; background: #fff; }
.fcombo { margin-left: 15px; margin-right: -15px; border-color: #adadad; background: #e1e1e1; letter-spacing: 0; }
.actions { grid-column: 3; display: flex; gap: 17px; margin-left: 16px; margin-right: -15px; }
.actions button { width: 108px; height: 31px; flex: none; padding: 0 0 1px; border: 1px solid #adadad; background: #e1e1e1; font: inherit; letter-spacing: .05px; color: #111; }
.actions .open { border: 2px solid #0f73c2; }
.grip { position: absolute; right: 2px; bottom: 2px; }
```
